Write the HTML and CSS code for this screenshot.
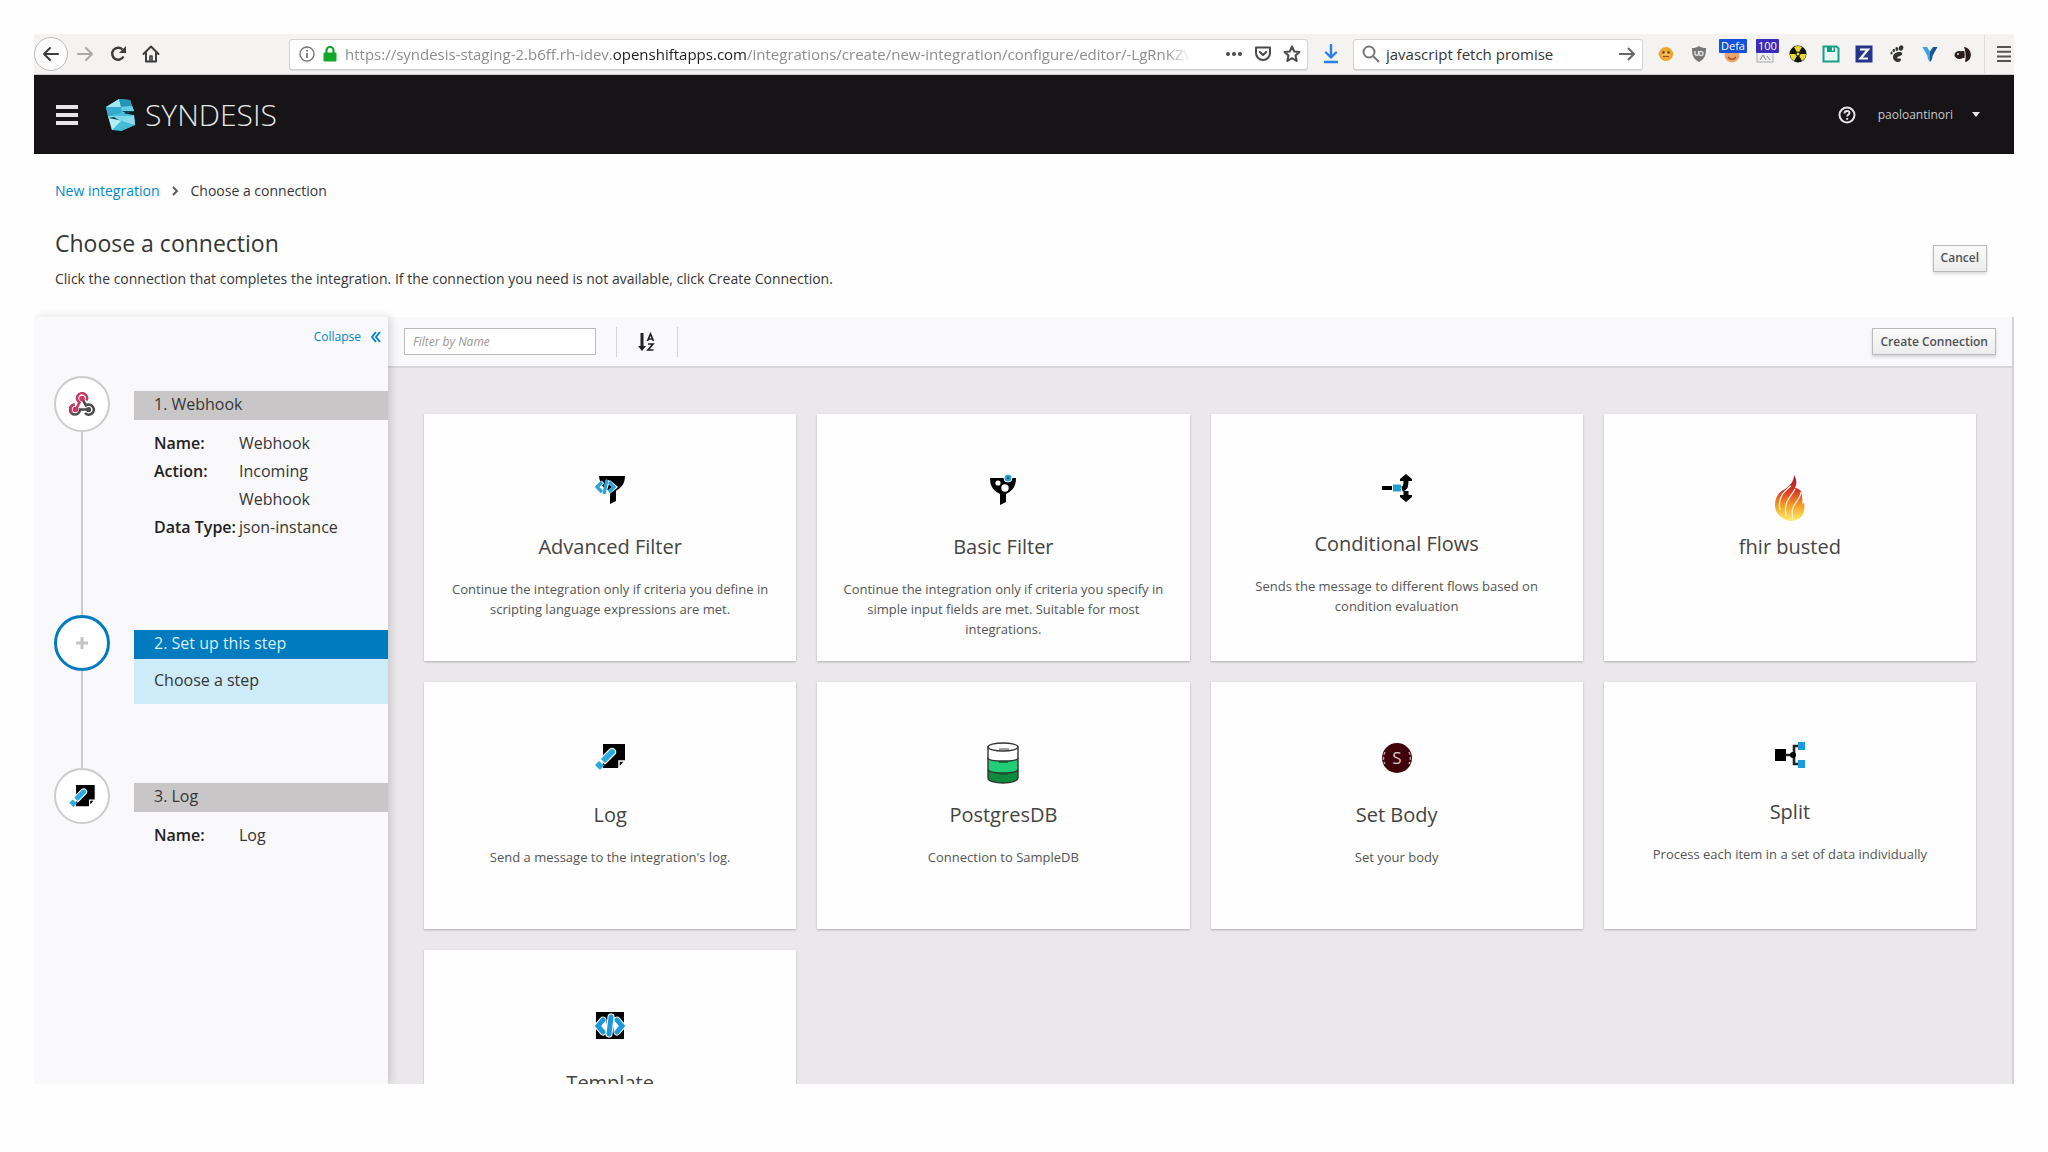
FILE: index.html
```html
<!DOCTYPE html>
<html lang="en">
<head>
    <meta charset="UTF-8">
    <meta name="viewport" content="width=device-width, initial-scale=1.0">
    <title>Syndesis - Choose a connection</title>
    <link rel="stylesheet" href="styles.css">
</head>
<body>
    <div class="window">
        <!-- Browser toolbar -->
        <div class="browser-bar">
            <div class="browser-nav">
                <button class="icon-btn back-btn" aria-label="Back">
                    <svg width="18" height="18" viewBox="0 0 18 18" fill="none" stroke="#3d3d3d" stroke-width="2" stroke-linecap="round" stroke-linejoin="round"><path d="M16 9H2M8 3L2 9l6 6"/></svg>
                </button>
                <button class="icon-btn nav-btn" aria-label="Forward">
                    <svg width="18" height="18" viewBox="0 0 18 18" fill="none" stroke="#a9a9a9" stroke-width="2" stroke-linecap="round" stroke-linejoin="round"><path d="M2 9h14M10 3l6 6-6 6"/></svg>
                </button>
                <button class="icon-btn nav-btn" aria-label="Reload">
                    <svg width="18" height="18" viewBox="0 0 18 18"><path d="M13.500 4.500A6 6 0 1 0 14.500 11.500" fill="none" stroke="#3d3d3d" stroke-width="2.400"/><path d="M10 8h7V1z" fill="#3d3d3d"/></svg>
                </button>
                <button class="icon-btn nav-btn" aria-label="Home">
                    <svg width="18" height="18" viewBox="0 0 18 18" fill="none" stroke="#3d3d3d" stroke-width="2" stroke-linejoin="round" stroke-linecap="round"><path d="M1.500 9L9 1.500 16.500 9M4 8v8.500h10V8"/><path d="M8 16v-5h2v5" stroke-width="1.600"/></svg>
                </button>
            </div>

            <div class="address-bar">
                <svg width="16" height="16" viewBox="0 0 16 16" fill="none" stroke="#777" stroke-width="1.400"><circle cx="8" cy="8" r="7"/><path d="M8 7v5M8 4v1.600" stroke-width="1.800"/></svg>
                <svg width="14" height="16" viewBox="0 0 14 16"><path d="M3.500 8V4.500a3.500 3.500 0 0 1 7 0V8" fill="none" stroke="#12a72c" stroke-width="2.200"/><rect x="0.500" y="6.500" width="13" height="9" rx="1" fill="#12a72c"/></svg>
                <div class="address-text" role="textbox" aria-label="Address">https://syndesis-staging-2.b6ff.rh-idev.<span class="address-domain">openshiftapps.com</span>/integrations/create/new-integration/configure/editor/-LgRnKZV</div>
                <div class="address-actions">
                    <button class="icon-btn" aria-label="Page actions">
                        <svg width="18" height="6" viewBox="0 0 18 6" fill="#4a4a4a"><circle cx="3" cy="3" r="2"/><circle cx="9" cy="3" r="2"/><circle cx="15" cy="3" r="2"/></svg>
                    </button>
                    <button class="icon-btn" aria-label="Save to Pocket">
                        <svg width="18" height="16" viewBox="0 0 18 16" fill="none" stroke="#4a4a4a" stroke-width="2" stroke-linejoin="round" stroke-linecap="round"><path d="M2 1.500h14V7a7 7 0 0 1-14 0z"/><path d="M5.800 6L9 9l3.200-3"/></svg>
                    </button>
                    <button class="icon-btn" aria-label="Bookmark">
                        <svg width="18" height="18" viewBox="0 0 18 18" fill="none" stroke="#4a4a4a" stroke-width="2" stroke-linejoin="round"><path d="M9 1.500l2.200 5 5.300.5-4 3.600 1.200 5.400L9 13.200 4.300 16l1.200-5.400-4-3.600 5.300-.5z"/></svg>
                    </button>
                </div>
            </div>

            <button class="icon-btn download-btn" aria-label="Downloads">
                <svg width="16" height="20" viewBox="0 0 16 20" fill="none" stroke="#2a7fe8" stroke-width="2.400" stroke-linecap="round" stroke-linejoin="round"><path d="M8 1v12M3 8.500l5 5 5-5M2 18h12"/></svg>
            </button>

            <form class="search-bar">
                <svg width="18" height="18" viewBox="0 0 18 18" fill="none" stroke="#777" stroke-width="2"><circle cx="7" cy="7" r="5.500"/><path d="M11 11l6 6"/></svg>
                <input type="text" aria-label="Search" value="javascript fetch promise">
                <button type="button" class="icon-btn" aria-label="Go">
                    <svg width="18" height="16" viewBox="0 0 18 16" fill="none" stroke="#666" stroke-width="2"><path d="M1 8h15M10 2l6 6-6 6"/></svg>
                </button>
            </form>

            <!-- Extensions -->
            <div class="extensions">
                <button class="icon-btn ext" aria-label="Monkey">
                    <svg width="16" height="18" viewBox="0 0 16 18"><circle cx="2.500" cy="9" r="2" fill="#e8a33a"/><circle cx="13.500" cy="9" r="2" fill="#e8a33a"/><circle cx="8" cy="9" r="7" fill="#f0a52c"/><path d="M4 9c0-3 8-3 8 0 0 6-8 6-8 0z" fill="#f7c65a"/><circle cx="5.500" cy="7.500" r="1.200" fill="#5f3a10"/><circle cx="10.500" cy="7.500" r="1.200" fill="#5f3a10"/><path d="M5 11.500h6" stroke="#a1501c" stroke-width="1.500"/></svg>
                </button>
                <button class="icon-btn ext" aria-label="Shield">
                    <svg width="16" height="18" viewBox="0 0 16 18"><path d="M8 1c2 1.500 4 2 7 2 0 7-1 11-7 14C2 14 1 10 1 3c3 0 5-.5 7-2z" fill="#777"/><path d="M4 6v2.500a1.800 1.800 0 0 0 3.600 0V6M8 8.500a2 2 0 1 0 4 0 2 2 0 1 0-4 0" fill="none" stroke="#ddd" stroke-width="1.400"/></svg>
                </button>
                <button class="icon-btn ext" aria-label="Profile">
                    <svg width="18" height="18" viewBox="0 0 18 18"><circle cx="9" cy="10" r="7.500" fill="#eda56f"/><path d="M5 12c2 3 6 3 8 0" stroke="#a45427" stroke-width="1.500" fill="none"/></svg>
                    <span class="badge badge-blue">Defa</span>
                </button>
                <button class="icon-btn ext" aria-label="Page score">
                    <svg width="18" height="18" viewBox="0 0 18 18"><rect x="1" y="1" width="16" height="16" fill="#eee" stroke="#aaa"/><path d="M4 15l3-5 3 5M11 11l3 4" stroke="#888" fill="none"/></svg>
                    <span class="badge badge-indigo">100</span>
                </button>
                <button class="icon-btn ext" aria-label="Radiation">
                    <svg width="18" height="18" viewBox="0 0 18 18"><circle cx="9" cy="9" r="8.500" fill="#111"/><path d="M9 9L5 2.100a8 8 0 0 1 8 0zM9 9h8a8 8 0 0 1-4 6.900zM9 9l-4 6.900A8 8 0 0 1 1 9z" fill="#e8d836"/><circle cx="9" cy="9" r="2" fill="#e8d836" stroke="#111"/></svg>
                </button>
                <button class="icon-btn ext" aria-label="Save">
                    <svg width="18" height="18" viewBox="0 0 18 18"><path d="M1.500 1.500h13l2 2v13h-15z" fill="#e9f7f2" stroke="#16a085" stroke-width="2"/><path d="M5 1h8v6H5z" fill="#16a085"/><path d="M10 2.500h1.500v3H10z" fill="#fff"/></svg>
                </button>
                <button class="icon-btn ext" aria-label="Zotero">
                    <svg width="18" height="18" viewBox="0 0 18 18"><rect x="0.500" y="0.500" width="17" height="17" fill="#25358c"/><path d="M5 4.500h8L5.500 13.500H13" fill="none" stroke="#fff" stroke-width="2.200"/></svg>
                </button>
                <button class="icon-btn ext" aria-label="Gnome">
                    <svg width="16" height="18" viewBox="0 0 16 18" fill="#333"><ellipse cx="12" cy="3" rx="2.200" ry="2.800" transform="rotate(25 12 3)"/><ellipse cx="7.800" cy="4" rx="1.400" ry="2"/><ellipse cx="4.800" cy="5.500" rx="1.200" ry="1.700"/><ellipse cx="2.500" cy="8" rx="1" ry="1.500"/><path d="M11.500 7C7 6.500 4 9 4 12c0 3.500 3 5 5 5s3.500-1.500 2.800-3-3 .5-3.600-1 5-2 5-4c0-1.200-.7-1.900-1.700-2z"/></svg>
                </button>
                <button class="icon-btn ext" aria-label="Vimium">
                    <svg width="16" height="18" viewBox="0 0 16 18"><path d="M0.500 2h4.500L8 6.500v10.500C6 15 5.500 13 5.500 11z" fill="#38a3dd"/><path d="M15.500 2H11L8 6.500v10.500c2-2 2.500-4 2.500-6z" fill="#17568f"/></svg>
                </button>
                <button class="icon-btn ext" aria-label="Night mode">
                    <svg width="18" height="18" viewBox="0 0 18 18"><ellipse cx="5.500" cy="10" rx="5" ry="4" fill="#2b1c1c"/><circle cx="4" cy="9" r="1" fill="#eee"/><path d="M10 2c9 1 9 14 1 15 1-4 1-10-1-15z" fill="#2b1c1c"/><path d="M9 6v7" stroke="#2b1c1c" stroke-width="3"/></svg>
                </button>
            </div>
            <button class="icon-btn app-menu" aria-label="Open menu">
                <svg width="14" height="18" viewBox="0 0 14 18" stroke="#555" stroke-width="2"><path d="M0 2h14M0 6.700h14M0 11.400h14M0 16h14"/></svg>
            </button>
        </div>

        <!-- Application header -->
        <header class="app-header">
            <button class="icon-btn" aria-label="Toggle navigation">
                <svg width="22" height="22" viewBox="0 0 22 22" fill="#e6e6e6"><path d="M0 1h22v4H0zM0 9h22v4H0zM0 17h22v4H0z"/></svg>
            </button>
            <a class="brand" href="#">
                <svg width="32" height="34" viewBox="0 0 32 34">
                    <path d="M1 9L14 1l11 1 4 11-12 3-14 2z" fill="#4fc0dc"/>
                    <path d="M1 9L14 1l2 8z" fill="#a5e5f2"/>
                    <path d="M14 1l11 1 2 6-11 1z" fill="#2596b4"/>
                    <path d="M16 9l11-1 2 5-12 3z" fill="#63d0e6"/>
                    <path d="M1 9l15 0 1 7-14 2z" fill="#35aaca"/>
                    <path d="M3 18l14-3 12 2 1 10-14 6-9-1z" fill="#46bddb"/>
                    <path d="M3 18l13 5-9 9z" fill="#b5ecf6"/>
                    <path d="M16 23l13-6 1 10z" fill="#8adcec"/>
                    <path d="M16 23l14 4-14 6z" fill="#45bcd8"/>
                    <path d="M3 18l10 0 16 0-13 5z" fill="#7fd8ea"/>
                    <path d="M17 13l12 0-7 3z" fill="#0b4252"/>
                    <path d="M3 20l6-1 5 3z" fill="#0b4252"/>
                </svg>
                <span>SYNDESIS</span>
            </a>
            <div class="user-area">
                <button class="icon-btn" aria-label="Help">
                    <svg width="18" height="18" viewBox="0 0 18 18" fill="none" stroke="#e6e6e6"><circle cx="9" cy="9" r="7.500" stroke-width="2"/><path d="M6.500 7.500c0-3.500 5-3 5-.5 0 1.500-2.300 1.500-2.300 3.500M9.200 12v1.800" stroke-width="1.900"/></svg>
                </button>
                <button class="user-btn">paoloantinori
                    <svg width="8" height="5" viewBox="0 0 8 5" fill="#e6e6e6"><path d="M0 0h8L4 5z"/></svg>
                </button>
            </div>
        </header>

        <!-- Page heading -->
        <div class="page-head">
            <nav class="breadcrumb">
                <a href="#">New integration</a>
                <svg width="7" height="10" viewBox="0 0 7 10" fill="none" stroke="#555" stroke-width="1.800"><path d="M1 1l4 4-4 4"/></svg>
                <span>Choose a connection</span>
            </nav>
            <div class="page-title">
                <div>
                    <h1>Choose a connection</h1>
                    <p>Click the connection that completes the integration. If the connection you need is not available, click Create Connection.</p>
                </div>
                <button class="btn">Cancel</button>
            </div>
        </div>

        <div class="workspace">
            <!-- Integration steps -->
            <aside class="sidebar">
                <button class="collapse-btn">Collapse
                    <svg width="10" height="12" viewBox="0 0 10 12" fill="none" stroke="#0088ce" stroke-width="2"><path d="M5 1L1 6l4 5M9 1L5 6l4 5"/></svg>
                </button>
                <ol class="steps">
                    <li class="step">
                        <div class="step-marker">
                            <div class="step-circle">
                                <svg width="26" height="24" viewBox="0 0 26 24" fill="none" stroke-width="2.600">
                                    <path d="M17.500 8.500A5 5 0 1 0 10.500 10.500L7 17.500" stroke="#c73a63"/>
                                    <path d="M5.500 12.500A5 5 0 1 0 11 17.500H19" stroke="#4b4b4b"/>
                                    <path d="M13 6.500l4 7a5 5 0 1 1-1 7.500" stroke="#4b4b4b"/>
                                    <path d="M5.500 12.500A5 5 0 0 0 3 21" stroke="#c73a63"/>
                                    <circle cx="13" cy="6.500" r="1.500" stroke="#c73a63"/><circle cx="6.500" cy="17.500" r="1.500" stroke="#c73a63"/><circle cx="19.500" cy="17.500" r="1.300" stroke="#4b4b4b"/>
                                </svg>
                            </div>
                            <div class="step-line"></div>
                        </div>
                        <div class="step-body">
                            <h2 class="step-title">1. Webhook</h2>
                            <dl class="step-details">
                                <dt>Name:</dt><dd>Webhook</dd>
                                <dt>Action:</dt><dd>Incoming Webhook</dd>
                                <dt>Data Type:</dt><dd>json-instance</dd>
                            </dl>
                        </div>
                    </li>
                    <li class="step active">
                        <div class="step-marker">
                            <div class="step-circle">
                                <svg width="14" height="14" viewBox="0 0 14 14" stroke="#c4c4c4" stroke-width="3"><path d="M7 1v12M1 7h12"/></svg>
                            </div>
                            <div class="step-line"></div>
                        </div>
                        <div class="step-body">
                            <h2 class="step-title">2. Set up this step</h2>
                            <p class="step-hint">Choose a step</p>
                        </div>
                    </li>
                    <li class="step">
                        <div class="step-marker">
                            <div class="step-circle">
                                <svg width="26" height="22" viewBox="0 0 30 26"><path d="M8 0h22v17l-7 8H8z" fill="#000"/><path d="M24 25v-7h6z" fill="#000" stroke="#fff" stroke-width="1.500"/><path d="M5 15L15 5c4-2 7 2 5 5L10 20z" fill="#29abe2" stroke="#fff" stroke-width="1.200"/><path d="M4 17l5 4.500-4 4.500L0 21z" fill="#29abe2"/></svg>
                            </div>
                        </div>
                        <div class="step-body">
                            <h2 class="step-title">3. Log</h2>
                            <dl class="step-details">
                                <dt>Name:</dt><dd>Log</dd>
                            </dl>
                        </div>
                    </li>
                </ol>
            </aside>

            <main class="content">
                <div class="toolbar">
                    <input type="text" class="filter-input" placeholder="Filter by Name" aria-label="Filter by Name">
                    <div class="sort-group">
                        <button class="icon-btn" aria-label="Sort ascending">
                            <svg width="18" height="20" viewBox="0 0 18 20" fill="none" stroke="#222"><path d="M4 1v15" stroke-width="3"/><path d="M0 14h8l-4 5z" fill="#222" stroke="none"/><path d="M9.500 9L12.500 2l3 7M10.500 7h4" stroke-width="1.700"/><path d="M10 12h5l-5 6h5.500" stroke-width="1.700"/></svg>
                        </button>
                    </div>
                    <button class="btn create-btn">Create Connection</button>
                </div>

                <!-- Connection cards -->
                <div class="card-grid">
                    <a class="card" href="#">
                        <div class="card-icon">
                            <svg width="30" height="30" viewBox="0 -2 30 30"><path d="M4 0h26c0 9-5 12-9 15v10l-6 3V15C9 13 5 9 4 0z" fill="#000"/><path d="M8 6l-6 5 6 5M14 6l6 5-6 5M13 4L9 18" fill="none" stroke="#fff" stroke-width="4"/><path d="M7 6l-5 5 5 5M14 6l5 5-5 5M12 4L9 18" fill="none" stroke="#29a3d6" stroke-width="3.200"/></svg>
                        </div>
                        <h3>Advanced Filter</h3>
                        <p>Continue the integration only if criteria you define in scripting language expressions are met.</p>
                    </a>
                    <a class="card" href="#">
                        <div class="card-icon">
                            <svg width="26" height="31" viewBox="0 0 26 31"><path d="M0 4h26c0 9-4 13-10 16v8l-6 3V20C4 17 0 13 0 4z" fill="#000"/><circle cx="8" cy="9" r="2.600" fill="#fff"/><circle cx="15" cy="14" r="3.700" fill="#fff"/><circle cx="18" cy="4" r="4" fill="#29a3d6" stroke="#fff"/><circle cx="18" cy="4" r="1.200" fill="#145a78"/></svg>
                        </div>
                        <h3>Basic Filter</h3>
                        <p>Continue the integration only if criteria you specify in simple input fields are met. Suitable for most integrations.</p>
                    </a>
                    <a class="card" href="#">
                        <div class="card-icon card-icon-flow">
                            <svg width="30" height="28" viewBox="0 0 30 28"><path d="M0 12h10v4H0z" fill="#000"/><rect x="11" y="10.500" width="8" height="7" fill="#1fa0cf"/><path d="M20 15c4-1 4-4 4-9M24 17v5" fill="none" stroke="#000" stroke-width="5"/><path d="M24 0l6 5v2H18V5zM24 28l6-5v-2H18v2z" fill="#000"/></svg>
                        </div>
                        <h3>Conditional Flows</h3>
                        <p>Sends the message to different flows based on condition evaluation</p>
                    </a>
                    <a class="card" href="#">
                        <div class="card-icon">
                            <svg width="32" height="48" viewBox="0 0 32 48">
                                <defs>
                                    <linearGradient id="flame" x1="0" y1="0" x2="0" y2="1"><stop offset="0" stop-color="#a9182b"/><stop offset="0.350" stop-color="#d8352a"/><stop offset="0.650" stop-color="#f59a23"/><stop offset="1" stop-color="#fdf06a"/></linearGradient>
                                </defs>
                                <path d="M20 1c3 5 3 9 1 13 2 0 4 1 6 3 1 5 2 9 1 13 1 0 2-1 2-2 2 12-3 18-13 19C8 46 1 40 1 31c0-8 4-13 10-16 5-3 9-8 9-14z" fill="url(#flame)"/>
                                <path d="M17 12C11 17 3 23 6 36M21 15c-3 7-12 11-9 27M27 18c-1 10-12 12-8 27" fill="none" stroke="#fff1d0" stroke-width="1.300"/>
                            </svg>
                        </div>
                        <h3>fhir busted</h3>
                    </a>
                    <a class="card" href="#">
                        <div class="card-icon">
                            <svg width="30" height="28" viewBox="0 -2 30 28"><path d="M8 0h22v17l-7 7H8z" fill="#000"/><path d="M24 24v-7h6z" fill="#000" stroke="#fff" stroke-width="1.500"/><path d="M5 15L15 5c4-2 7 2 5 5L10 20z" fill="#29abe2" stroke="#fff" stroke-width="1.200"/><path d="M4 17l5 4.500-4 4.500L0 21z" fill="#29abe2"/></svg>
                        </div>
                        <h3>Log</h3>
                        <p>Send a message to the integration's log.</p>
                    </a>
                    <a class="card" href="#">
                        <div class="card-icon">
                            <svg width="32" height="42" viewBox="0 0 32 42" stroke="#333" stroke-width="1.400">
                                <path d="M1 28v8c0 3 7 5 15 5s15-2 15-5v-8z" fill="#0d8a3c"/>
                                <path d="M1 16v11c0 3 7 4 15 4s15-1 15-4V16z" fill="#21ce77"/>
                                <path d="M1 5v11c0 2 7 3 15 3s15-1 15-3V5z" fill="#fff"/>
                                <ellipse cx="16" cy="5" rx="15" ry="4" fill="#fff"/>
                                <path d="M12 7h10" fill="none" stroke="#777"/>
                                <path d="M12 20h9M12 32h9" fill="none" stroke="#0b5a2b"/>
                            </svg>
                        </div>
                        <h3>PostgresDB</h3>
                        <p>Connection to SampleDB</p>
                    </a>
                    <a class="card" href="#">
                        <div class="card-icon">
                            <svg width="32" height="32" viewBox="0 0 32 32"><circle cx="16" cy="16" r="15" fill="#400208"/><path d="M4 10a13 13 0 0 0 0 12M28 10a13 13 0 0 1 0 12" fill="none" stroke="#c3a6aa" stroke-width="1.400" stroke-dasharray="3 2"/><text x="16" y="22" text-anchor="middle" class="badge-letter">S</text></svg>
                        </div>
                        <h3>Set Body</h3>
                        <p>Set your body</p>
                    </a>
                    <a class="card" href="#">
                        <div class="card-icon card-icon-flow">
                            <svg width="30" height="26" viewBox="0 0 30 26"><path d="M26 4h-7v18h7M10 13h9" fill="none" stroke="#222" stroke-width="2.600"/><rect x="0" y="7" width="11" height="12" fill="#000"/><circle cx="18" cy="13" r="3" fill="#000"/><rect x="23" y="0" width="7" height="8" fill="#1a9bdc"/><rect x="23" y="18" width="7" height="8" fill="#1a9bdc"/></svg>
                        </div>
                        <h3>Split</h3>
                        <p>Process each item in a set of data individually</p>
                    </a>
                    <a class="card" href="#">
                        <div class="card-icon">
                            <svg width="32" height="29" viewBox="0 -2 32 29"><rect x="2" y="0" width="28" height="27" fill="#000"/><path d="M9 8l-5 6 5 6zM23 8l5 6-5 6zM17 5l-2 17" fill="none" stroke="#fff" stroke-width="7" stroke-linecap="round" stroke-linejoin="round"/><path d="M9 8l-5 6 5 6M23 8l5 6-5 6M17 5l-2 17" fill="none" stroke="#1d97dc" stroke-width="5" stroke-linecap="round"/></svg>
                        </div>
                        <h3>Template</h3>
                    </a>
                </div>
            </main>
        </div>
    </div>
</body>
</html>
```
FILE: styles.css
```css
:root {
    --blue: #0088ce;
    --blue-dark: #007bbf;
    --text: #363636;
    --gray: #c8c6c7;
    --panel: #f9f8fa;
    --surface: #eae8ea;
}

* {
    margin: 0;
    padding: 0;
    box-sizing: border-box;
}

body {
    background: #fefefe;
    color: var(--text);
    font: 14px/20px "Open Sans", "Noto Sans", sans-serif;
}

button,
input {
    font: inherit;
    color: inherit;
}

a {
    color: inherit;
    text-decoration: none;
}

svg {
    display: block;
    flex: none;
}

.window {
    display: flex;
    flex-direction: column;
    height: calc(100vh - 102px);
    margin: 34px 34px 68px;
    overflow: hidden;
}

.icon-btn {
    display: flex;
    align-items: center;
    justify-content: center;
    border: none;
    background: none;
    cursor: pointer;
}

/* Browser toolbar */
.browser-bar {
    display: flex;
    align-items: center;
    flex: none;
    height: 41px;
    background: #f4f3f2;
    border-bottom: 1px solid #cfcfcf;
    font-size: 15px;
}

.browser-nav {
    display: flex;
    align-items: center;
    width: 255px;
}

.back-btn {
    width: 34px;
    height: 34px;
    border: 1px solid #bbb;
    border-radius: 50%;
    background: #fcfcfc;
}

.nav-btn {
    width: 33px;
    height: 34px;
}

.address-bar,
.search-bar {
    display: flex;
    align-items: center;
    height: 31px;
    background: #fff;
    border: 1px solid #d4d4d4;
    border-radius: 3px;
    box-shadow: 0 1px 1px rgba(0, 0, 0, 0.1);
}

.address-bar {
    flex: 1;
    min-width: 0;
    gap: 8px;
    padding: 0 6px 0 9px;
}

.address-text {
    flex: 1;
    min-width: 0;
    overflow: hidden;
    white-space: nowrap;
    color: #8e8e8e;
    -webkit-mask-image: linear-gradient(90deg, #000 97%, transparent);
    mask-image: linear-gradient(90deg, #000 97%, transparent);
}

.address-domain {
    color: #222;
}

.address-actions {
    display: flex;
    align-items: center;
    gap: 11px;
    padding-left: 26px;
}

.download-btn {
    width: 45px;
}

.search-bar {
    width: 290px;
    gap: 6px;
    padding: 0 6px 0 8px;
}

.search-bar input {
    flex: 1;
    min-width: 0;
    border: none;
    outline: none;
    background: none;
}

.extensions {
    display: flex;
    align-items: center;
    padding: 0 5px 0 6px;
    border-right: 1px solid #ddd;
}

.ext {
    position: relative;
    width: 33px;
    height: 38px;
}

.badge {
    position: absolute;
    top: 4px;
    left: 4px;
    height: 14px;
    padding: 0 2px;
    border-radius: 1px;
    color: #fff;
    font-size: 11px;
    line-height: 14px;
}

.badge-blue {
    background: #1450d8;
}

.badge-indigo {
    left: 8px;
    background: #3a2cb8;
}

.app-menu {
    width: 29px;
    padding-left: 9px;
}

/* Application header */
.app-header {
    display: flex;
    align-items: center;
    flex: none;
    height: 79px;
    padding: 0 34px 0 22px;
    background: #161416;
    color: #e6e6e6;
}

.brand {
    display: flex;
    align-items: center;
    gap: 8px;
    margin-left: 27px;
    font-size: 30px;
    font-weight: 300;
}

.user-area {
    display: flex;
    align-items: center;
    gap: 22px;
    margin-left: auto;
    font-size: 12px;
}

.user-btn {
    display: flex;
    align-items: center;
    gap: 19px;
    border: none;
    background: none;
    color: #c9c9c9;
}

/* Page heading */
.page-head {
    flex: none;
    padding: 27px 27px 28px 21px;
}

.breadcrumb {
    display: flex;
    align-items: center;
    gap: 12px;
}

.breadcrumb a {
    color: var(--blue);
}

.page-title {
    display: flex;
    align-items: center;
    justify-content: space-between;
    margin-top: 26px;
}

.page-title h1 {
    margin-bottom: 10px;
    font-size: 23px;
    line-height: 32px;
    font-weight: 400;
}

.btn {
    height: 27px;
    padding: 0 7px;
    border: 1px solid #bbb;
    background: linear-gradient(#fafafa, #ededed);
    box-shadow: 0 2px 3px rgba(3, 3, 3, 0.15);
    color: #4d5258;
    font-size: 12px;
    font-weight: 600;
    line-height: 20px;
    cursor: pointer;
}

.workspace {
    display: flex;
    flex: 1;
    min-height: 0;
}

/* Integration steps */
.sidebar {
    position: relative;
    flex: none;
    width: 354px;
    background: var(--panel);
    box-shadow: 3px 0 8px rgba(0, 0, 0, 0.14);
}

.collapse-btn {
    display: flex;
    align-items: center;
    gap: 10px;
    height: 39px;
    margin: 0 7px 20px auto;
    border: none;
    background: none;
    color: var(--blue);
    font-size: 12px;
    cursor: pointer;
}

.steps {
    padding-left: 20px;
    list-style: none;
    font-size: 16px;
    line-height: 28px;
}

.step {
    display: flex;
    gap: 24px;
}

.step-marker {
    display: flex;
    flex-direction: column;
    align-items: center;
}

.step-circle {
    display: flex;
    align-items: center;
    justify-content: center;
    width: 56px;
    height: 56px;
    border: 2px solid #ccc;
    border-radius: 50%;
    background: #fff;
}

.step-line {
    flex: 1;
    width: 2px;
    background: #ccc;
}

.step-body {
    flex: 1;
    padding: 15px 0 64px;
}

.step-title {
    height: 29px;
    padding-left: 20px;
    background: var(--gray);
    font-size: 16px;
    line-height: 27px;
    font-weight: 400;
}

.step-details {
    display: grid;
    grid-template-columns: 85px 1fr;
    padding: 9px 20px 10px;
}

.step-details dt {
    color: #222;
    font-weight: 600;
    white-space: nowrap;
}

.step-hint {
    padding: 7px 20px 10px;
    background: #cdebf8;
}

.active .step-circle {
    border: 3px solid var(--blue-dark);
}

.active .step-title {
    background: var(--blue-dark);
    color: #d9eefa;
}

/* Connection list */
.content {
    flex: 1;
    min-width: 0;
    overflow: hidden;
    background: var(--surface);
    border-right: 2px solid #d5d3d5;
}

.toolbar {
    display: flex;
    align-items: center;
    height: 51px;
    padding: 0 16px;
    background: var(--panel);
    border-bottom: 2px solid #d8d6d8;
}

.filter-input {
    width: 192px;
    height: 27px;
    padding: 0 8px;
    border: 1px solid #bbb;
    background: #fff;
    font-size: 12px;
}

.filter-input::placeholder {
    color: #999;
    font-style: italic;
}

.sort-group {
    display: flex;
    align-items: center;
    justify-content: center;
    width: 62px;
    height: 30px;
    margin-left: 20px;
    border: 1px solid #d5d3d5;
    border-width: 0 1px;
}

.create-btn {
    margin-left: auto;
}

.card-grid {
    display: grid;
    grid-template-columns: repeat(4, 1fr);
    grid-auto-rows: 247px;
    gap: 21px;
    padding: 46px 36px;
}

.card {
    padding: 60px 22px 0;
    background: #fefefe;
    box-shadow: 0 1px 2px rgba(3, 3, 3, 0.25);
    text-align: center;
}

.card-icon {
    display: flex;
    justify-content: center;
    height: 48px;
}

.card-icon-flow {
    height: 45px;
}

.badge-letter {
    fill: #d8c8ca;
    font-size: 17px;
}

.card h3 {
    margin: 10px 0 17px;
    color: #444;
    font-size: 20px;
    line-height: 30px;
    font-weight: 400;
}

.card p {
    color: #555;
    font-size: 13px;
}
```
